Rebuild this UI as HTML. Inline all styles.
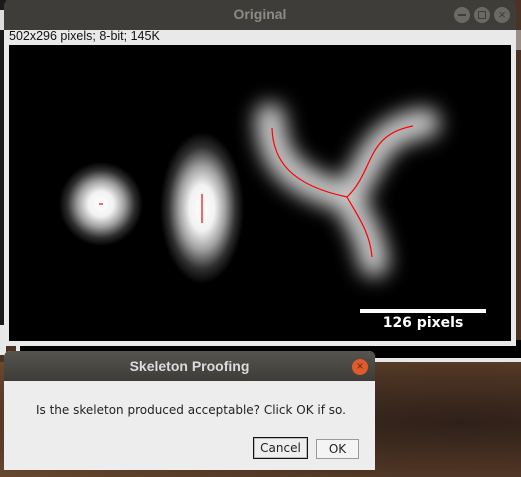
<!DOCTYPE html>
<html><head><style>
body{margin:0;width:521px;height:477px;overflow:hidden;position:relative;background:#4a3322;font-family:"Liberation Sans","DejaVu Sans",sans-serif}
.abs{position:absolute}
</style></head><body>
<div class="abs" style="left:0;top:362px;width:521px;height:115px;background:radial-gradient(ellipse at 460px 60px,#2e2019 0,#4b3323 55%,#6a4a30 100%)"></div>
<div class="abs" style="left:0;top:0;width:6px;height:325px;background:#1a1a1a"></div>
<div class="abs" style="left:0;top:10px;width:4px;height:20px;background:#ddd"></div>
<div class="abs" style="left:0;top:325px;width:6px;height:30px;background:#e8e8e8"></div>
<div class="abs" style="left:16px;top:340px;width:505px;height:22px;background:#e8e8e8"></div>
<div class="abs" style="left:20px;top:340px;width:501px;height:18px;background:#000"></div>
<div class="abs" style="left:514px;top:30px;width:7px;height:20px;background:#9a8f86"></div>
<div class="abs" style="left:4px;top:0;width:512px;height:30px;background:#3e3d39;border-radius:6px 6px 0 0"></div>
<div class="abs" style="left:4px;top:6px;width:512px;text-align:center;color:#8c8b86;font-weight:bold;font-size:14px">Original</div>
<div class="abs" style="left:454px;top:7px;width:16px;height:16px;border-radius:50%;background:#6a6964"></div>
<div class="abs" style="left:458px;top:14px;width:8px;height:2px;background:#3e3d39"></div>
<div class="abs" style="left:474px;top:7px;width:16px;height:16px;border-radius:50%;background:#6a6964"></div>
<div class="abs" style="left:478px;top:11px;width:6px;height:6px;border:1.5px solid #3e3d39"></div>
<div class="abs" style="left:494px;top:7px;width:16px;height:16px;border-radius:50%;background:#6a6964;color:#3e3d39;font-size:13px;line-height:16px;text-align:center">×</div>
<div class="abs" style="left:4px;top:30px;width:512px;height:316px;background:#e9e9e9"></div>
<div class="abs" style="left:9px;top:29px;font-size:12.5px;color:#111">502x296 pixels; 8-bit; 145K</div>
<svg class="abs" style="left:9px;top:45px" width="502" height="296" viewBox="9 45 502 296">
<defs>
<radialGradient id="c"><stop offset="0" stop-color="#fff"/><stop offset=".3" stop-color="#f2f2f2"/><stop offset=".55" stop-color="#a0a0a0"/><stop offset=".8" stop-color="#303030"/><stop offset="1" stop-color="#000"/></radialGradient>
<filter id="b" x="-50%" y="-50%" width="200%" height="200%"><feGaussianBlur stdDeviation="10"/></filter>
</defs>
<rect x="9" y="45" width="502" height="296" fill="#000"/>
<circle cx="101" cy="204" r="42" fill="url(#c)"/>
<ellipse cx="202" cy="208" rx="42" ry="76" fill="url(#c)"/>
<g filter="url(#b)" fill="none" stroke="#c8c8c8" stroke-width="30" stroke-linecap="round">
<path d="M270 118 C272 150 280 180 347 197 C356 215 370 235 374 262"/>
<path d="M347 197 C372 170 370 130 425 123"/>
</g>
<g fill="none" stroke="#f00" stroke-width="1.2">
<path d="M272 128 C273 160 290 185 347 197 C357 215 370 232 372 257"/>
<path d="M347 197 C375 170 365 135 413 126"/>
<path d="M202 194 L202 223"/>
<path d="M99 204 L103 204"/>
</g>
<rect x="360" y="309" width="126" height="4" fill="#fff"/>
<text x="423" y="327" fill="#fff" font-size="14" font-weight="bold" text-anchor="middle" font-family="DejaVu Sans,sans-serif">126 pixels</text>
</svg>
<div class="abs" style="left:4px;top:351px;width:371px;height:119px;background:#ededed;border-radius:6px 6px 0 0;overflow:hidden">
<div style="height:30px;background:linear-gradient(#56544e,#3d3c38);color:#dcdcdc;font-weight:bold;font-size:14px;text-align:center;line-height:31px">Skeleton Proofing</div>
<div class="abs" style="left:348px;top:8px;width:16px;height:16px;border-radius:50%;background:#e05a2b;color:#6a2a10;font-size:12px;line-height:15px;text-align:center">×</div>
<div class="abs" style="left:32px;top:52px;font-size:12px;color:#222;font-family:'DejaVu Sans',sans-serif">Is the skeleton produced acceptable? Click OK if so.</div>
<div class="abs" style="left:249px;top:86px;width:53px;height:20px;border:1px solid #111;background:#eee;box-shadow:inset 0 0 0 1px #bbb;font-size:12px;line-height:20px;text-align:center;color:#222;font-family:'DejaVu Sans',sans-serif">Cancel</div>
<div class="abs" style="left:312px;top:88px;width:41px;height:18px;border:1px solid #999;background:#f4f4f4;font-size:12px;line-height:18px;text-align:center;color:#222;font-family:'DejaVu Sans',sans-serif">OK</div>
</div>
</body></html>
